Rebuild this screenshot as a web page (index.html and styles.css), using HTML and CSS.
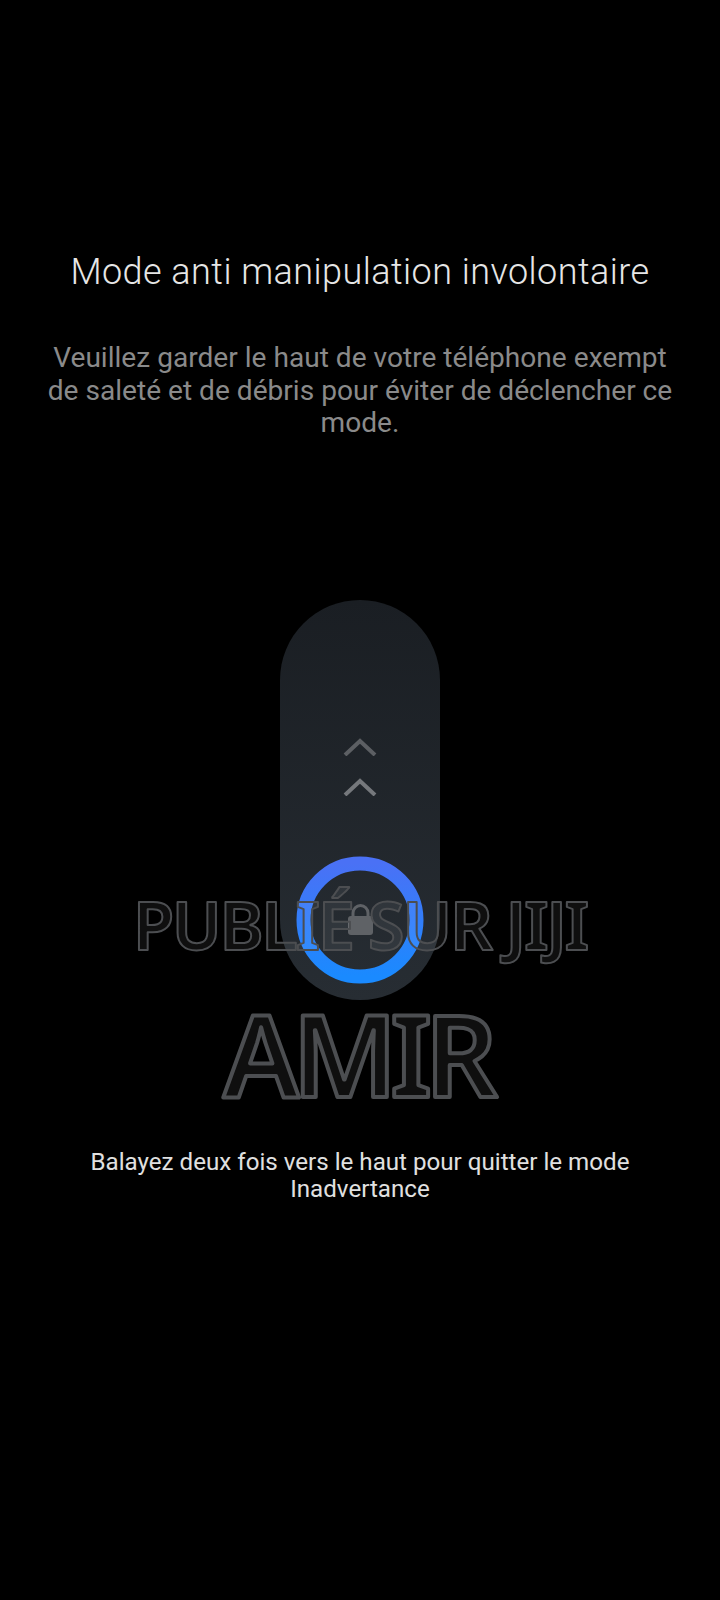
FILE: index.html
```html
<!DOCTYPE html>
<html lang="fr">
<head>
  <meta charset="UTF-8">
  <meta name="viewport" content="width=device-width, initial-scale=1.0">
  <title>Mode anti manipulation involontaire</title>
  <link rel="stylesheet" href="styles.css">
</head>
<body>
  <div class="screen">
    <h1 class="title">Mode anti manipulation involontaire</h1>
    <p class="desc">Veuillez garder le haut de votre téléphone exempt de saleté et de débris pour éviter de déclencher ce mode.</p>

    <div class="pill">
      <svg class="chevron first" width="34" height="18" viewBox="0 0 34 18">
        <path d="M2 17L17 3L32 17" fill="none" stroke="#5c5f63" stroke-width="4"/>
      </svg>
      <svg class="chevron second" width="34" height="18" viewBox="0 0 34 18">
        <path d="M2 17L17 3L32 17" fill="none" stroke="#75787c" stroke-width="4"/>
      </svg>
      <svg class="ring" width="128" height="128" viewBox="0 0 128 128">
        <defs>
          <linearGradient id="ringGrad" x1="0" y1="0" x2="0" y2="1">
            <stop offset="0" stop-color="#4a71f5"/>
            <stop offset="1" stop-color="#1a8aff"/>
          </linearGradient>
        </defs>
        <circle cx="64" cy="64" r="56.5" fill="none" stroke="url(#ringGrad)" stroke-width="14"/>
        <path d="M57 62v-5a7.5 7.5 0 0 1 15 0v5" fill="none" stroke="#5f6266" stroke-width="3"/>
        <rect x="52" y="60" width="25" height="19" rx="3" fill="#5f6266"/>
      </svg>
    </div>

    <svg class="marks" width="720" height="300" viewBox="0 0 720 300">
      <text class="mark-top" x="360" y="110" text-anchor="middle">PUBLIÉ SUR JIJI</text>
      <text class="mark-name" x="357" y="257" text-anchor="middle">AMIR</text>
    </svg>

    <p class="hint">Balayez deux fois vers le haut pour quitter le mode Inadvertance</p>
  </div>
</body>
</html>
```

FILE: styles.css
```css
html, body {
  margin: 0;
  padding: 0;
  background: #000;
}
.screen {
  position: relative;
  width: 720px;
  height: 1600px;
  display: flex;
  flex-direction: column;
  align-items: center;
  font-family: Roboto, sans-serif;
  overflow: hidden;
}
.title {
  margin: 250px 0 0;
  font-size: 36px;
  line-height: 44px;
  font-weight: 300;
  letter-spacing: 0.45px;
  color: #e6e6e6;
  text-align: center;
  white-space: nowrap;
}
.desc {
  width: 640px;
  margin: 48px 0 0;
  font-size: 28.1px;
  line-height: 32.6px;
  color: #8a8a8a;
  text-align: center;
}
.pill {
  width: 160px;
  height: 400px;
  margin-top: 160px;
  border-radius: 80px;
  background: linear-gradient(#1a1e23, #272d33);
  display: flex;
  flex-direction: column;
  align-items: center;
}
.chevron {
  display: block;
}
.chevron.first {
  margin-top: 138px;
}
.chevron.second {
  margin-top: 22px;
}
.ring {
  display: block;
  margin-top: 60px;
}
.marks {
  position: absolute;
  left: 0;
  top: 840px;
  font-family: "Noto Sans", sans-serif;
  font-weight: 600;
}
.marks text {
  fill: #fff;
  fill-opacity: 0.06;
  stroke: #4c4e51;
  stroke-linejoin: round;
}
.mark-top {
  font-size: 67px;
  letter-spacing: -2.4px;
  stroke-width: 2px;
}
.mark-name {
  font-size: 113px;
  letter-spacing: -7px;
  stroke-width: 4px;
}
.hint {
  width: 600px;
  margin: 149px 0 0;
  font-size: 24.15px;
  line-height: 27px;
  color: #e0e0e0;
  text-align: center;
}
```
